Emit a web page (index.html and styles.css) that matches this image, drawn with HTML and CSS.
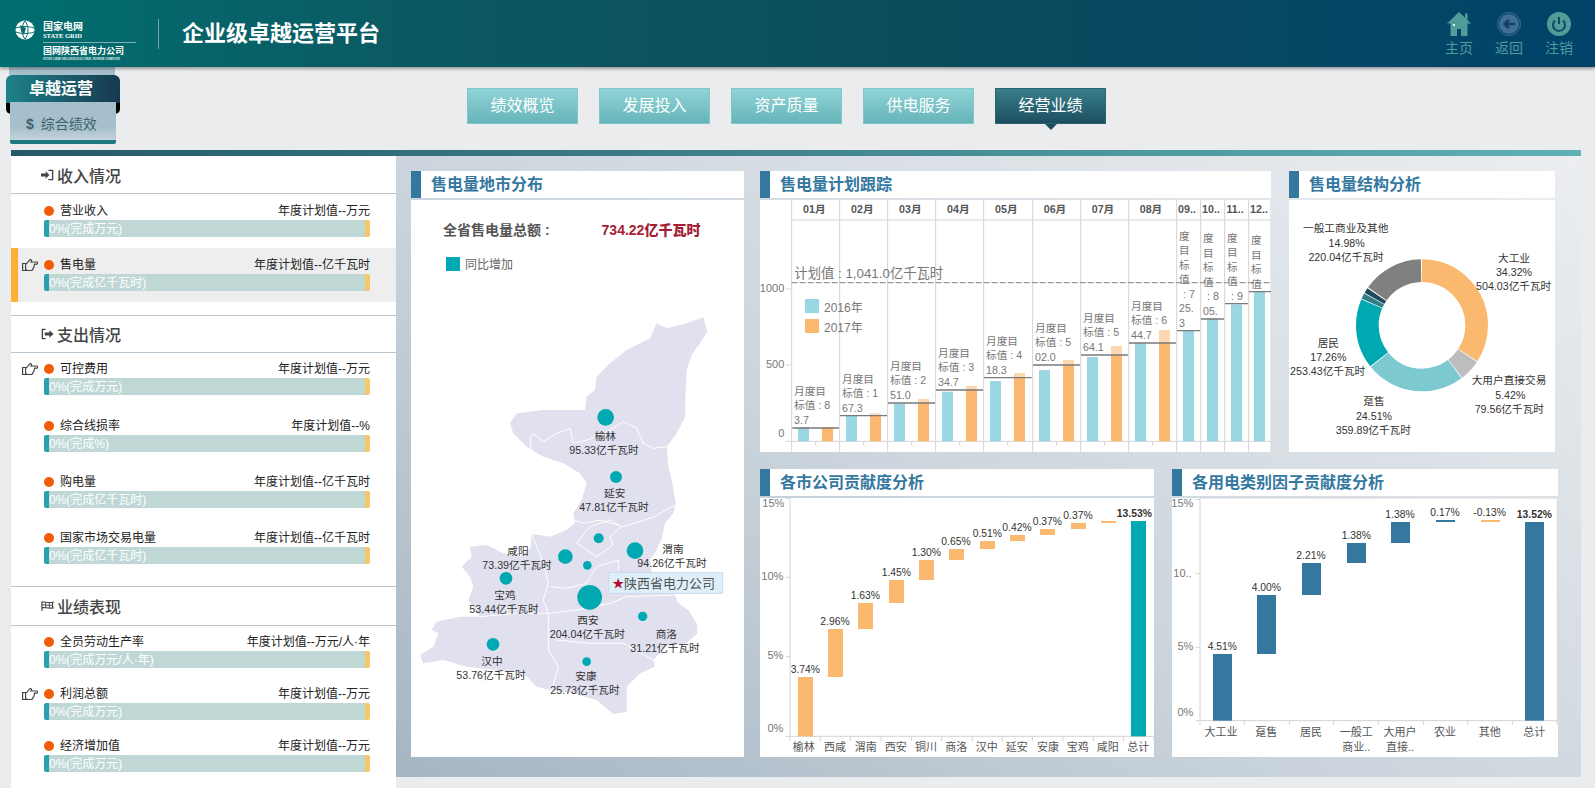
FILE: index.html
```html
<!DOCTYPE html>
<html>
<head>
	<meta charset="UTF-8">
	<title>企业级卓越运营平台</title>
	<link rel="stylesheet" href="styles.css">
</head>
<body>
	<header class="top">
		<div class="logo">
			<svg class="globe" viewBox="0 0 20 20">
				<circle cx="10" cy="10" r="9.5" fill="#fff" />
				<path d="M1 8c5-2 12-2 18 0M1 12c5 2 12 2 18 0M10 1c-4 5-4 13 0 18M10 1c4 5 4 13 0 18" fill="none" stroke="#0a6c70" stroke-width="1" />
				<path d="M5 5l6 3-2 7-3-4z" fill="#0a6c70" />
			</svg>
			<div class="logo-text">
				<p class="logo-cn">国家电网</p>
				<p class="logo-en">STATE GRID</p>
				<p class="logo-sub">国网陕西省电力公司</p>
				<p class="logo-tiny">STATE GRID SHAANXI ELECTRIC POWER COMPANY</p>
			</div>
		</div>
		<h1 class="sys-name">企业级卓越运营平台</h1>
		<nav class="tools">
			<a class="tool">
				<svg viewBox="0 0 24 24"><path d="M12 0L0 11.5h3.5V24h6.5v-7h4v7h6.500V11.500H24l-3.500-3.300V1.500h-2.500v4.300z" fill="#4f9c99" /><rect x="6" y="12" width="2" height="2" fill="#cfe" /></svg>
				<span>主页</span>
			</a>
			<a class="tool">
				<svg viewBox="0 0 24 24"><circle cx="12" cy="12" r="11.500" fill="none" stroke="#3f6f92" /><circle cx="12" cy="12" r="10" fill="#3f6f92" /><path d="M18 12H9M12 8l-4.500 4 4.500 4" fill="none" stroke="#123f66" stroke-width="2.500" /></svg>
				<span>返回</span>
			</a>
			<a class="tool">
				<svg viewBox="0 0 24 24"><circle cx="12" cy="12" r="12" fill="#4f9c99" /><path d="M8 8.500a6 6 0 1 0 8 0M12 5v7" fill="none" stroke="#0c4a68" stroke-width="2" /></svg>
				<span>注销</span>
			</a>
		</nav>
	</header>

	<div class="bar">
		<div class="tabs">
			<div class="tab-main">卓越运营</div>
			<div class="tab-sub"><b>$</b>综合绩效</div>
		</div>
		<ul class="nav">
			<li>绩效概览</li>
			<li>发展投入</li>
			<li>资产质量</li>
			<li>供电服务</li>
			<li class="on">经营业绩</li>
		</ul>
	</div>

	<div class="strip"></div>

	<main class="wrap">
		<aside class="side">
			<h2 class="sec-title">
				<svg viewBox="0 0 14 12"><path d="M0 4.500h5V2l4 4-4 4V7.500H0z" fill="#444" /><path d="M8 1h4.500v10H8" fill="none" stroke="#444" stroke-width="1.500" /></svg>
				收入情况
			</h2>
			<div class="item item-a">
				<div class="item-head"><i class="dot"></i><span class="name">营业收入</span><span class="plan">年度计划值--万元</span></div>
				<div class="meter"><span>0%(完成万元)</span></div>
			</div>
			<div class="item item-on">
				<svg class="hand" viewBox="0 0 16 14"><use href="#hand" /></svg>
				<div class="item-head"><i class="dot"></i><span class="name">售电量</span><span class="plan">年度计划值--亿千瓦时</span></div>
				<div class="meter"><span>0%(完成亿千瓦时)</span></div>
			</div>

			<h2 class="sec-title sec-line">
				<svg viewBox="0 0 14 12"><path d="M5 1H1.500v10H5" fill="none" stroke="#444" stroke-width="1.500" /><path d="M4 4.500h5V2l4.500 4L9 10V7.500H4z" fill="#444" /></svg>
				支出情况
			</h2>
			<div class="item item-b item-first">
				<svg class="hand" viewBox="0 0 16 14"><use href="#hand" /></svg>
				<div class="item-head"><i class="dot"></i><span class="name">可控费用</span><span class="plan">年度计划值--万元</span></div>
				<div class="meter"><span>0%(完成万元)</span></div>
			</div>
			<div class="item item-b">
				<div class="item-head"><i class="dot"></i><span class="name">综合线损率</span><span class="plan">年度计划值--%</span></div>
				<div class="meter"><span>0%(完成%)</span></div>
			</div>
			<div class="item item-b">
				<div class="item-head"><i class="dot"></i><span class="name">购电量</span><span class="plan">年度计划值--亿千瓦时</span></div>
				<div class="meter"><span>0%(完成亿千瓦时)</span></div>
			</div>
			<div class="item item-b">
				<div class="item-head"><i class="dot"></i><span class="name">国家市场交易电量</span><span class="plan">年度计划值--亿千瓦时</span></div>
				<div class="meter"><span>0%(完成亿千瓦时)</span></div>
			</div>

			<h2 class="sec-title sec-line sec-last">
				<svg viewBox="0 0 14 12"><path d="M1 1v10.500M1 2c3-1 5 1 12 0-1 2-1 4 0 6-6 1-9-1-12 0z" fill="none" stroke="#444" stroke-width="1.200" /><path d="M1 5c3-1 6 1 12 0M5 2v6M9 2v6" fill="none" stroke="#444" stroke-width="1" /></svg>
				业绩表现
			</h2>
			<div class="item item-c">
				<div class="item-head"><i class="dot"></i><span class="name">全员劳动生产率</span><span class="plan">年度计划值--万元/人·年</span></div>
				<div class="meter"><span>0%(完成万元/人·年)</span></div>
			</div>
			<div class="item item-c">
				<svg class="hand" viewBox="0 0 16 14"><use href="#hand" /></svg>
				<div class="item-head"><i class="dot"></i><span class="name">利润总额</span><span class="plan">年度计划值--万元</span></div>
				<div class="meter"><span>0%(完成万元)</span></div>
			</div>
			<div class="item item-c">
				<div class="item-head"><i class="dot"></i><span class="name">经济增加值</span><span class="plan">年度计划值--万元</span></div>
				<div class="meter"><span>0%(完成万元)</span></div>
			</div>
		</aside>

		<section class="board">
			<!-- 地图 -->
			<div class="card card-map">
				<h3 class="card-title">售电量地市分布</h3>
				<div class="card-body">
					<div class="map-head">
						<p class="map-total"><span>全省售电量总额 :</span><b>734.22亿千瓦时</b></p>
						<p class="map-legend"><i></i>同比增加</p>
					</div>
					<svg class="chart map" viewBox="3 -63 999 1434">
						<path class="land" d="M880 52L892 95 870 130 845 165 830 210 826 300 826 350 800 400 770 440 775 500 785 540 797 610 790 640 765 670 755 715 740 750 720 780 725 820 795 885 805 910 835 930 860 970 862 1000 830 1030 765 1040 730 1080 735 1100 690 1120 650 1160 650 1235 610 1242 560 1200 490 1180 420 1170 380 1160 340 1120 260 1110 170 1100 100 1080 40 1090 30 1065 70 1040 85 1000 65 990 80 965 150 950 210 950 175 900 190 860 180 830 155 800 185 770 180 740 230 735 280 760 330 770 362 745 365 702 420 710 470 690 495 670 490 640 515 600 530 550 510 520 460 490 400 470 350 440 310 400 300 370 320 340 400 330 470 330 525 330 530 290 555 270 560 230 600 190 650 150 720 115 740 70 770 85 830 70z" />
						<path class="border" d="M365 460L360 415 370 400 400 425 440 400 480 385 490 430 530 420 560 410 610 385 640 365 680 385 700 430 730 445 770 440M490 660L520 670 570 660 640 680 735 650 750 640 795 615M500 730L540 680 600 660 635 680 600 710 610 735 560 770 500 730M420 860L470 865 530 850 560 800 625 780 625 810M365 702L400 790 415 850 400 900 415 940M210 950L320 940 415 940 500 930 600 910 650 890 795 885M415 940L415 1050 445 1100 425 1170M440 1020L540 1030 640 1030 730 1080" />
						<circle class="pt" cx="587" cy="352" r="25" />
						<circle class="pt" cx="618" cy="531" r="18" />
						<circle class="pt" cx="566" cy="715" r="15" />
						<circle class="pt" cx="675" cy="752" r="25" />
						<circle class="pt" cx="466" cy="770" r="22" />
						<circle class="pt" cx="532" cy="796" r="13" />
						<circle class="pt" cx="288" cy="835" r="19" />
						<circle class="pt" cx="539" cy="892" r="37" />
						<circle class="pt" cx="698" cy="949" r="14" />
						<circle class="pt" cx="249" cy="1033" r="19" />
						<circle class="pt" cx="530" cy="1085" r="13" />
						<text class="t-map" x="586" y="408">榆林</text><text class="t-map" x="582" y="450">95.33亿千瓦时</text>
						<text class="t-map" x="614" y="580">延安</text><text class="t-map" x="612" y="621">47.81亿千瓦时</text>
						<text class="t-map" x="324" y="754">咸阳</text><text class="t-map" x="321" y="795">73.39亿千瓦时</text>
						<text class="t-map" x="789" y="747">渭南</text><text class="t-map" x="786" y="790">94.26亿千瓦时</text>
						<text class="t-map" x="285" y="886">宝鸡</text><text class="t-map" x="282" y="928">53.44亿千瓦时</text>
						<text class="t-map" x="534" y="960">西安</text><text class="t-map" x="532" y="1002">204.04亿千瓦时</text>
						<text class="t-map" x="769" y="1002">商洛</text><text class="t-map" x="765" y="1044">31.21亿千瓦时</text>
						<text class="t-map" x="246" y="1083">汉中</text><text class="t-map" x="243" y="1125">53.76亿千瓦时</text>
						<text class="t-map" x="528" y="1128">安康</text><text class="t-map" x="525" y="1170">25.73亿千瓦时</text>
						<rect class="tip" x="596" y="818" width="342" height="62" />
						<text class="t-star" x="625" y="852">★</text>
						<text class="t-tip" x="642" y="851">陕西省电力公司</text>
					</svg>
				</div>
			</div>

			<div class="board-right">
				<div class="board-row">
					<!-- 计划跟踪 -->
					<div class="card card-plan">
						<h3 class="card-title">售电量计划跟踪</h3>
						<div class="card-body">
							<svg class="chart" viewBox="15 105 1533 756">
								<path class="grid" d="M110 105V860M254 105V860M398 105V860M542 105V860M686 105V860M833 105V860M977 105V860M1121 105V860M1265 105V860M1337 105V860M1409 105V860M1481 105V860M1548 105V860M110 165H1548M93 829H1548M93 372H110M93 600H110M182 829V842M326 829V842M470 829V842M614 829V842M758 829V842M905 829V842M1049 829V842M1193 829V842" />
								<g class="b16">
									<rect x="129" y="787" width="33" height="42" /><rect x="273" y="750" width="33" height="79" /><rect x="417" y="715" width="33" height="114" /><rect x="561" y="680" width="33" height="149" /><rect x="705" y="648" width="33" height="181" /><rect x="852" y="615" width="33" height="214" /><rect x="996" y="576" width="33" height="253" /><rect x="1140" y="534" width="33" height="295" /><rect x="1284" y="495" width="33" height="334" /><rect x="1356" y="460" width="33" height="369" /><rect x="1428" y="418" width="33" height="411" /><rect x="1497" y="380" width="33" height="449" />
								</g>
								<g class="b17">
									<rect x="201" y="787" width="33" height="42" /><rect x="345" y="752" width="33" height="77" /><rect x="489" y="714" width="33" height="115" /><rect x="633" y="675" width="33" height="154" /><rect x="777" y="638" width="33" height="191" /><rect x="924" y="600" width="33" height="229" /><rect x="1068" y="570" width="33" height="259" /><rect x="1212" y="534" width="33" height="295" />
								</g>
								<g class="b17up">
									<rect x="345" y="745" width="33" height="7" /><rect x="489" y="702" width="33" height="12" /><rect x="633" y="663" width="33" height="12" /><rect x="777" y="624" width="33" height="14" /><rect x="924" y="585" width="33" height="15" /><rect x="1068" y="543" width="33" height="27" /><rect x="1212" y="495" width="33" height="39" />
								</g>
								<path class="ref" d="M112 789H252M255 752H396M399 714H540M543 675H684M687 638H830M834 600H975M978 570H1119M1122 534H1263M1266 497H1335M1338 462H1407M1410 416H1479M1482 380H1548" />
								<path class="plan-line" d="M110 353H1548" />
								<text class="t-plan" x="118" y="325">计划值 : 1,041.0亿千瓦时</text>
								<rect class="b16" x="150" y="402" width="42" height="42" />
								<rect class="b17" x="150" y="462" width="42" height="42" />
								<text class="t-leg" x="207" y="430">2016年</text>
								<text class="t-leg" x="207" y="490">2017年</text>
								<text class="t-axis" x="88" y="369">1000</text><text class="t-axis" x="88" y="597">500</text><text class="t-axis" x="88" y="803">0</text>
								<g class="t-head">
									<text x="178" y="132">01月</text><text x="322" y="132">02月</text><text x="466" y="132">03月</text><text x="610" y="132">04月</text><text x="754" y="132">05月</text><text x="900" y="132">06月</text><text x="1044" y="132">07月</text><text x="1188" y="132">08月</text><text x="1296" y="132">09..</text><text x="1368" y="132">10..</text><text x="1440" y="132">11..</text><text x="1512" y="132">12..</text>
								</g>
								<g class="t-goal">
									<text x="117" y="678">月度目</text><text x="117" y="721">标值 : 8</text><text x="117" y="765">3.7</text>
									<text x="261" y="641">月度目</text><text x="261" y="684">标值 : 1</text><text x="261" y="729">67.3</text>
									<text x="405" y="603">月度目</text><text x="405" y="646">标值 : 2</text><text x="405" y="690">51.0</text>
									<text x="549" y="564">月度目</text><text x="549" y="606">标值 : 3</text><text x="549" y="651">34.7</text>
									<text x="693" y="527">月度目</text><text x="693" y="570">标值 : 4</text><text x="693" y="615">18.3</text>
									<text x="840" y="488">月度目</text><text x="840" y="531">标值 : 5</text><text x="840" y="576">02.0</text>
									<text x="984" y="459">月度目</text><text x="984" y="501">标值 : 5</text><text x="984" y="546">64.1</text>
									<text x="1128" y="423">月度目</text><text x="1128" y="465">标值 : 6</text><text x="1128" y="510">44.7</text>
									<text x="1272" y="213">度</text><text x="1272" y="255">目</text><text x="1272" y="300">标</text><text x="1272" y="343">值</text><text x="1284" y="387">: 7</text><text x="1272" y="430">25.</text><text x="1272" y="473">3</text>
									<text x="1344" y="219">度</text><text x="1344" y="263">目</text><text x="1344" y="306">标</text><text x="1344" y="351">值</text><text x="1356" y="393">: 8</text><text x="1344" y="438">05.</text>
									<text x="1416" y="219">度</text><text x="1416" y="261">目</text><text x="1416" y="305">标</text><text x="1416" y="348">值</text><text x="1428" y="393">: 9</text>
									<text x="1488" y="225">度</text><text x="1488" y="269">目</text><text x="1488" y="312">标</text><text x="1488" y="357">值</text>
								</g>
							</svg>
						</div>
					</div>

					<!-- 结构分析 -->
					<div class="card card-pie">
						<h3 class="card-title">售电量结构分析</h3>
						<div class="card-body">
							<svg class="chart" viewBox="30 105 798 756">
								<g class="ring" transform="rotate(-90 429 481)">
									<circle cx="429" cy="481" r="164" pathLength="100" stroke="#fbb96f" stroke-dasharray="34.100 100" />
									<circle cx="429" cy="481" r="164" pathLength="100" stroke="#bdbdbd" stroke-dasharray="5.200 100" stroke-dashoffset="-34.320" />
									<circle cx="429" cy="481" r="164" pathLength="100" stroke="#7ccad0" stroke-dasharray="24.300 100" stroke-dashoffset="-39.740" />
									<circle cx="429" cy="481" r="164" pathLength="100" stroke="#00a9b1" stroke-dasharray="17.060 100" stroke-dashoffset="-64.250" />
									<circle cx="429" cy="481" r="164" pathLength="100" stroke="#2f7f86" stroke-dasharray="1.400 100" stroke-dashoffset="-81.510" />
									<circle cx="429" cy="481" r="164" pathLength="100" stroke="#1f4a5f" stroke-dasharray="1.300 100" stroke-dashoffset="-83.100" />
									<circle cx="429" cy="481" r="164" pathLength="100" stroke="#808080" stroke-dasharray="14.900 100" stroke-dashoffset="-84.700" />
								</g>
								<g class="t-pie">
									<text x="200" y="190">一般工商业及其他</text><text x="203" y="234">14.98%</text><text x="201" y="276">220.04亿千瓦时</text>
									<text x="705" y="278">大工业</text><text x="705" y="321">34.32%</text><text x="704" y="363">504.03亿千瓦时</text>
									<text x="148" y="533">居民</text><text x="148" y="576">17.26%</text><text x="146" y="619">253.43亿千瓦时</text>
									<text x="690" y="646">大用户直接交易</text><text x="694" y="690">5.42%</text><text x="691" y="733">79.56亿千瓦时</text>
									<text x="285" y="708">趸售</text><text x="285" y="752">24.51%</text><text x="283" y="795">359.89亿千瓦时</text>
								</g>
							</svg>
						</div>
					</div>
				</div>

				<div class="board-row">
					<!-- 各市公司 -->
					<div class="card card-city">
						<h3 class="card-title">各市公司贡献度分析</h3>
						<div class="card-body">
							<svg class="chart" viewBox="15 99 1182 777">
								<path class="grid" d="M105 99V814M92 100H105M92 337H105M92 575H105M92 814H1197M105 814V828M196 814V828M286 814V828M378 814V828M469 814V828M560 814V828M652 814V828M742 814V828M832 814V828M924 814V828M1015 814V828M1105 814V828M1197 814V828" />
								<g class="b17">
									<rect x="129" y="636" width="45" height="178" /><rect x="219" y="492" width="45" height="144" /><rect x="309" y="414" width="45" height="78" /><rect x="402" y="345" width="45" height="69" /><rect x="492" y="285" width="45" height="60" /><rect x="582" y="252" width="45" height="33" /><rect x="675" y="228" width="45" height="24" /><rect x="765" y="210" width="45" height="18" /><rect x="855" y="192" width="45" height="18" /><rect x="948" y="174" width="45" height="18" /><rect x="1038" y="168" width="45" height="6" />
								</g>
								<rect class="b-total" x="1128" y="168" width="45" height="646" />
								<text class="t-axis" x="88" y="115">15%</text><text class="t-axis" x="85" y="334">10%</text><text class="t-axis" x="85" y="570">5%</text><text class="t-axis" x="85" y="790">0%</text>
								<g class="t-val">
									<text x="151" y="612">3.74%</text><text x="240" y="468">2.96%</text><text x="331" y="390">1.63%</text><text x="424" y="321">1.45%</text><text x="514" y="261">1.30%</text><text x="603" y="228">0.65%</text><text x="697" y="204">0.51%</text><text x="786" y="186">0.42%</text><text x="877" y="168">0.37%</text><text x="969" y="150">0.37%</text><text class="t-sum" x="1138" y="144">13.53%</text>
								</g>
								<g class="t-cat">
									<text x="146" y="847">榆林</text><text x="240" y="847">西咸</text><text x="332" y="847">渭南</text><text x="422" y="847">西安</text><text x="513" y="847">铜川</text><text x="604" y="847">商洛</text><text x="695" y="847">汉中</text><text x="785" y="847">延安</text><text x="879" y="847">安康</text><text x="968" y="847">宝鸡</text><text x="1058" y="847">咸阳</text><text x="1150" y="847">总计</text>
								</g>
							</svg>
						</div>
					</div>

					<!-- 用电类别 -->
					<div class="card card-type">
						<h3 class="card-title">各用电类别因子贡献度分析</h3>
						<div class="card-body">
							<svg class="chart" viewBox="21 99 1158 777">
								<path class="grid" d="M105 99V767M105 99H1177V767M92 104H105M92 326H105M92 547H105M92 767H1177M105 767V780M238 767V780M373 767V780M505 767V780M640 767V780M775 767V780M908 767V780M1042 767V780M1176 767V780" />
								<g class="b-blue">
									<rect x="144" y="567" width="57" height="200" /><rect x="276" y="390" width="57" height="177" /><rect x="411" y="294" width="57" height="96" /><rect x="546" y="234" width="57" height="60" /><rect x="678" y="171" width="57" height="63" /><rect x="813" y="165" width="57" height="6" /><rect x="1080" y="171" width="57" height="596" />
								</g>
								<rect class="b17" x="948" y="165" width="57" height="6" />
								<text class="t-axis" x="85" y="115">15%</text><text class="t-axis" x="80" y="323">10..</text><text class="t-axis" x="85" y="544">5%</text><text class="t-axis" x="85" y="742">0%</text>
								<g class="t-val">
									<text x="172" y="543">4.51%</text><text x="304" y="366">4.00%</text><text x="438" y="270">2.21%</text><text x="574" y="210">1.38%</text><text x="705" y="147">1.38%</text><text x="840" y="141">0.17%</text><text x="974" y="141">-0.13%</text><text class="t-sum" x="1108" y="147">13.52%</text>
								</g>
								<g class="t-cat">
									<text x="168" y="800">大工业</text><text x="304" y="800">趸售</text><text x="438" y="800">居民</text><text x="574" y="800">一般工</text><text x="574" y="846">商业..</text><text x="705" y="800">大用户</text><text x="705" y="846">直接..</text><text x="840" y="800">农业</text><text x="974" y="800">其他</text><text x="1108" y="800">总计</text>
								</g>
							</svg>
						</div>
					</div>
				</div>
			</div>
		</section>
	</main>

	<svg class="defs" width="0" height="0">
		<symbol id="hand" viewBox="0 0 16 14">
			<path d="M.6 6.500h3v7h-3zM3.600 7C5 7 6 5 7 3.500 7.500 2.500 9 2 9.500 3.500 9.700 4 9.500 4.500 9 5h5.500c1.600 0 1.600 2.200 0 2.200h-2c0 1-.1 1.800-.5 2.300 0 1-.5 1.500-1 1.700 0 1.300-1 2.300-2 2.300H5.500l-1.900-.9" fill="none" stroke="#444" stroke-width="1.200" />
		</symbol>
	</svg>
</body>
</html>
```

FILE: styles.css
```css
* {
	box-sizing: border-box;
}
html, body {
	margin: 0;
	height: 788px;
	overflow: hidden;
}
body {
	background: #ebecee;
	font-family: "Liberation Sans", "Noto Sans CJK SC", sans-serif;
	font-size: 12px;
	color: #333;
}
p, h1, h2, h3, ul {
	margin: 0;
	padding: 0;
}
li {
	list-style: none;
}
.defs {
	position: absolute;
}

/* 头部 */
.top {
	display: flex;
	align-items: center;
	height: 67px;
	padding: 0 22px 0 15px;
	background: linear-gradient(90deg, #006e70 0%, #0b5a62 25%, #0c4b5c 60%, #00436a 100%);
	box-shadow: 0 2px 3px rgba(0, 0, 0, .35);
	position: relative;
	color: #fff;
}
.logo {
	display: flex;
	width: 143px;
	height: 48px;
}
.globe {
	width: 20px;
	height: 20px;
	margin-top: 10px;
	flex: none;
}
.logo-text {
	margin: 11px 0 0 8px;
	width: 93px;
}
.logo-cn {
	font-size: 10px;
	line-height: 11px;
	font-weight: bold;
}
.logo-en {
	font: bold 6.5px/8px "Liberation Serif", serif;
	padding-bottom: 2px;
	border-bottom: 1px solid #7fb1b3;
	margin-bottom: 3px;
}
.logo-sub {
	font-size: 9px;
	line-height: 11px;
	font-weight: bold;
}
.logo-tiny {
	font: bold 3px/4px "Liberation Serif", serif;
	white-space: nowrap;
}
.sys-name {
	font-size: 22px;
	line-height: 30px;
	font-weight: bold;
	padding-left: 23px;
	border-left: 1px solid #6fa4a8;
}
.tools {
	display: flex;
	gap: 22px;
	margin-left: auto;
	margin-top: 3px;
}
.tool {
	display: flex;
	flex-direction: column;
	align-items: center;
	width: 28px;
	font-size: 14px;
	line-height: 20px;
	color: #4c9b9e;
}
.tool svg {
	width: 24px;
	height: 24px;
	margin-bottom: 2px;
}

/* 导航 */
.bar {
	display: flex;
	height: 83px;
	padding-left: 6px;
}
.tabs {
	width: 114px;
	height: 77px;
	padding-top: 8px;
	background: linear-gradient(#a7bfcb, #a7bfcb) 3px 0/106px 8px no-repeat;
}
.tab-main {
	position: relative;
	height: 28px;
	border-radius: 6px 6px 0 0;
	background: linear-gradient(90deg, #1e8189, #17394f);
	color: #fff;
	font-size: 16px;
	font-weight: bold;
	line-height: 27px;
	text-align: center;
	padding-right: 4px;
}
.tab-main:after {
	content: "";
	position: absolute;
	left: 0;
	right: 0;
	bottom: -11px;
	height: 11px;
	background: #000;
	border-radius: 0 0 5px 5px;
}
.tab-sub {
	position: relative;
	margin: -1px 4px 0;
	height: 42px;
	padding: 10px 0 0 16px;
	background: linear-gradient(#a5bfcc 0, #a5bfcc 60%, #c3d3da 90%, #1e7a80 90%);
	border-radius: 0 0 2px 2px;
	color: #3f5f6b;
	font-size: 14px;
	line-height: 24px;
}
.tab-sub b {
	margin-right: 7px;
}
.nav {
	display: flex;
	gap: 21px;
	margin: 21px 0 0 347px;
}
.nav li {
	position: relative;
	width: 111px;
	height: 36px;
	background: linear-gradient(#90d4d7, #66b4b9);
	border: 1px solid #80c6ca;
	color: #fff;
	font-size: 16px;
	line-height: 34px;
	text-align: center;
}
.nav .on {
	background: linear-gradient(#3a7f8b, #1c4e60);
	border-color: #2a6574;
}
.nav .on:after {
	content: "";
	position: absolute;
	left: 50%;
	bottom: -7px;
	margin-left: -6px;
	border: 6px solid transparent;
	border-bottom: 0;
	border-top-color: #1c4e60;
}
.strip {
	height: 6px;
	margin: 0 14px 0 11px;
	background: linear-gradient(90deg, #24586a, #5fb1b5);
}

/* 主体 */
.wrap {
	display: flex;
	margin-left: 11px;
}
.side {
	width: 385px;
	height: 632px;
	background: #fff;
}
.sec-title {
	display: flex;
	align-items: center;
	gap: 3px;
	height: 38px;
	padding-left: 30px;
	font-size: 16px;
	font-weight: 500;
	color: #444;
	border-bottom: 1px solid #b8c6cf;
}
.sec-title svg {
	width: 13px;
	height: 12px;
}
.sec-line {
	border-top: 1px solid #b8c6cf;
	margin-top: 13px;
}
.sec-last {
	height: 40px;
	margin-top: 8px;
}
.item {
	position: relative;
	padding: 9px 26px 0 33px;
	height: 54px;
}
.item-on {
	background: #eee;
	border-left: 7px solid #fbb034;
	padding-left: 26px;
}
.item-b {
	height: 56px;
	padding-top: 8px;
}
.item-first {
	height: 57px;
}
.item-c {
	height: 52px;
	padding-top: 8px;
}
.item-head {
	display: flex;
	align-items: center;
	height: 17px;
	color: #222;
	line-height: 17px;
}
.dot {
	width: 10px;
	height: 10px;
	border-radius: 50%;
	background: #f25c05;
	margin: 0 6px 2px 0;
}
.plan {
	margin-left: auto;
}
.hand {
	position: absolute;
	left: 11px;
	top: 8px;
	width: 16px;
	height: 14px;
}
.item-on .hand {
	left: 4px;
	top: 9px;
}
.meter {
	height: 17px;
	border-radius: 2px;
	background: linear-gradient(90deg, #2b9fae 5px, transparent 5px), linear-gradient(270deg, #f5c96a 5px, #bfd8d6 5px);
	color: #fff;
	line-height: 18px;
	padding-left: 5px;
}

/* 右侧面板 */
.board {
	display: flex;
	gap: 16px;
	width: 1185px;
	height: 621px;
	padding: 15px 0 0 15px;
	background: linear-gradient(32deg, #a5b6c3 0%, #ccd5dd 45%, #eceef0 100%);
}
.board-right {
	display: flex;
	flex-direction: column;
	gap: 17px;
}
.board-row {
	display: flex;
	gap: 18px;
}
.card-title {
	display: flex;
	align-items: center;
	height: 27px;
	padding-left: 10px;
	background: #fff;
	border-left: 10px solid #35789f;
	color: #35789f;
	font-size: 16px;
	line-height: 27px;
}
.card-body {
	margin-top: 2px;
	background: #fff;
}
.chart {
	display: block;
	width: 100%;
}
.card-map {
	width: 333px;
}
.card-plan {
	width: 511px;
}
.card-pie {
	width: 266px;
}
.card-city {
	width: 394px;
}
.card-type {
	width: 386px;
}
.map-head {
	height: 79px;
	padding: 20px 0 0 32px;
}
.map-total {
	display: flex;
	font-size: 14px;
	line-height: 20px;
	font-weight: bold;
	color: #555;
}
.map-total b {
	margin-left: 52px;
	color: #a61e36;
}
.map-legend {
	display: flex;
	align-items: center;
	margin: 15px 0 0 3px;
	color: #666;
}
.map-legend i {
	width: 14px;
	height: 14px;
	margin-right: 5px;
	background: #00a9b1;
}

/* 图表 */
text {
	dominant-baseline: central;
}
.land {
	fill: #e0e0ee;
}
.border {
	fill: none;
	stroke: #fff;
	stroke-width: 3;
}
.pt {
	fill: #00a9b1;
}
.t-map {
	font-size: 32px;
	text-anchor: middle;
	fill: #333;
}
.tip {
	fill: #dfeff9;
	stroke: #c5dcec;
	stroke-width: 3;
}
.t-star {
	font-size: 36px;
	text-anchor: middle;
	fill: #b01030;
}
.t-tip {
	font-size: 39px;
	fill: #555;
}
.grid {
	fill: none;
	stroke: #d4d4d4;
	stroke-width: 3;
}
.b16 {
	fill: #9bd7e2;
}
.b17 {
	fill: #fbb96f;
}
.b17up {
	fill: #fdd6b4;
}
.b-total {
	fill: #00a9b1;
}
.b-blue {
	fill: #35789f;
}
.ref {
	fill: none;
	stroke: #7a7a7a;
	stroke-width: 4;
}
.plan-line {
	stroke: #999;
	stroke-width: 4;
	stroke-dasharray: 18 6;
}
.t-plan {
	font-size: 40px;
	fill: #777;
}
.t-leg {
	font-size: 36px;
	fill: #777;
}
.t-axis {
	font-size: 33px;
	text-anchor: end;
	fill: #777;
}
.t-head text {
	font-size: 32px;
	font-weight: bold;
	text-anchor: middle;
	fill: #555;
}
.t-goal text {
	font-size: 32px;
	fill: #777;
}
.ring circle {
	fill: none;
	stroke-width: 68;
}
.t-pie text {
	font-size: 32px;
	text-anchor: middle;
	fill: #333;
}
.t-val text {
	font-size: 31px;
	text-anchor: middle;
	fill: #333;
}
.t-val .t-sum {
	font-weight: bold;
}
.t-cat text {
	font-size: 33px;
	text-anchor: middle;
	fill: #555;
}
```
